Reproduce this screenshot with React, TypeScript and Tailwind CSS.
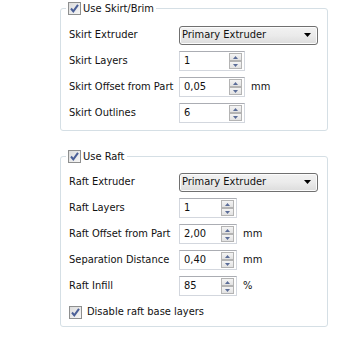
import React from 'react';

const font = { fontFamily: '"DejaVu Sans Condensed", "Liberation Sans", Arial, sans-serif' };

const CheckBox: React.FC = () => (
    <span className="w-[13px] h-[13px] border border-[#8e8f8f] bg-gradient-to-br from-[#dcdcdc] to-[#f6f6f6] flex items-center justify-center shrink-0">
        <svg width="11" height="11" viewBox="0 0 11 11">
            <path d="M2 5.5 L4.3 8.3 L9 1.8" fill="none" stroke="#4a5f97" strokeWidth="2" />
        </svg>
    </span>
);

const Combo: React.FC<{ value: string }> = ({ value }) => (
    <div className="w-[139px] h-[19px] border border-[#707070] rounded-[3px] bg-gradient-to-b from-[#f2f2f2] via-[#ebebeb] to-[#dcdcdc] flex items-center pl-[2px] pr-[6px] shadow-[inset_0_0_0_1px_#fcfcfc]">
        <span className="flex-1">{value}</span>
        <svg width="7" height="4" viewBox="0 0 7 4">
            <path d="M0 0 H7 L3.5 4 Z" fill="#000" />
        </svg>
    </div>
);

const SpinBox: React.FC<{ value: string; width: string }> = ({ value, width }) => (
    <div className={`${width} h-[20px] bg-white border border-[#d3d7de] border-t-[#abadb3] flex items-center pl-[4px] pr-[2px]`}>
        <span className="flex-1">{value}</span>
        <div className="flex flex-col w-[13px] h-[16px]">
            {[0, 1].map(i => (
                <div key={i} className="flex-1 border border-[#b4b4b4] bg-gradient-to-b from-[#f4f4f4] to-[#e2e2e2] flex items-center justify-center">
                    <svg width="5" height="3" viewBox="0 0 5 3">
                        <path d={i === 0 ? 'M0 3 H5 L2.5 0 Z' : 'M0 0 H5 L2.5 3 Z'} fill="#5a6c98" />
                    </svg>
                </div>
            ))}
        </div>
    </div>
);

const Row: React.FC<{ label: string; children: React.ReactNode; unit?: string }> = ({ label, children, unit }) => (
    <div className="flex items-center h-[20px]">
        <span className="w-[110px] shrink-0">{label}</span>
        {children}
        {unit && <span className="ml-[6px]">{unit}</span>}
    </div>
);

const Group: React.FC<{ title: string; children: React.ReactNode; className?: string }> = ({ title, children, className }) => (
    <fieldset className={`w-[268px] border border-[#d5dfe5] rounded-[3px] ${className ?? ''}`}>
        <legend className="ml-[5px] px-[2px] h-[13px] leading-[13px] flex items-center gap-[2px]">
            <CheckBox />
            <span>{title}</span>
        </legend>
        {children}
    </fieldset>
);

export default function App() {
    return (
        <div className="w-[344px] h-[354px] bg-white pl-[60px] pt-[2px] text-[11px] text-[#111]" style={font}>
            <Group title="Use Skirt/Brim">
                <div className="flex flex-col gap-[6px] pl-[8px] pt-[10px] pb-[7px]">
                    <Row label="Skirt Extruder"><Combo value="Primary Extruder" /></Row>
                    <Row label="Skirt Layers"><SpinBox value="1" width="w-[66px]" /></Row>
                    <Row label="Skirt Offset from Part" unit="mm"><SpinBox value="0,05" width="w-[66px]" /></Row>
                    <Row label="Skirt Outlines"><SpinBox value="6" width="w-[66px]" /></Row>
                </div>
            </Group>
            <Group title="Use Raft" className="mt-[19px]">
                <div className="flex flex-col gap-[6px] pl-[8px] pt-[9px] pb-[4px]">
                    <Row label="Raft Extruder"><Combo value="Primary Extruder" /></Row>
                    <Row label="Raft Layers"><SpinBox value="1" width="w-[58px]" /></Row>
                    <Row label="Raft Offset from Part" unit="mm"><SpinBox value="2,00" width="w-[58px]" /></Row>
                    <Row label="Separation Distance" unit="mm"><SpinBox value="0,40" width="w-[58px]" /></Row>
                    <Row label="Raft Infill" unit="%"><SpinBox value="85" width="w-[58px]" /></Row>
                    <div className="flex items-center h-[20px] gap-[5px]">
                        <CheckBox />
                        <span>Disable raft base layers</span>
                    </div>
                </div>
            </Group>
        </div>
    );
}
